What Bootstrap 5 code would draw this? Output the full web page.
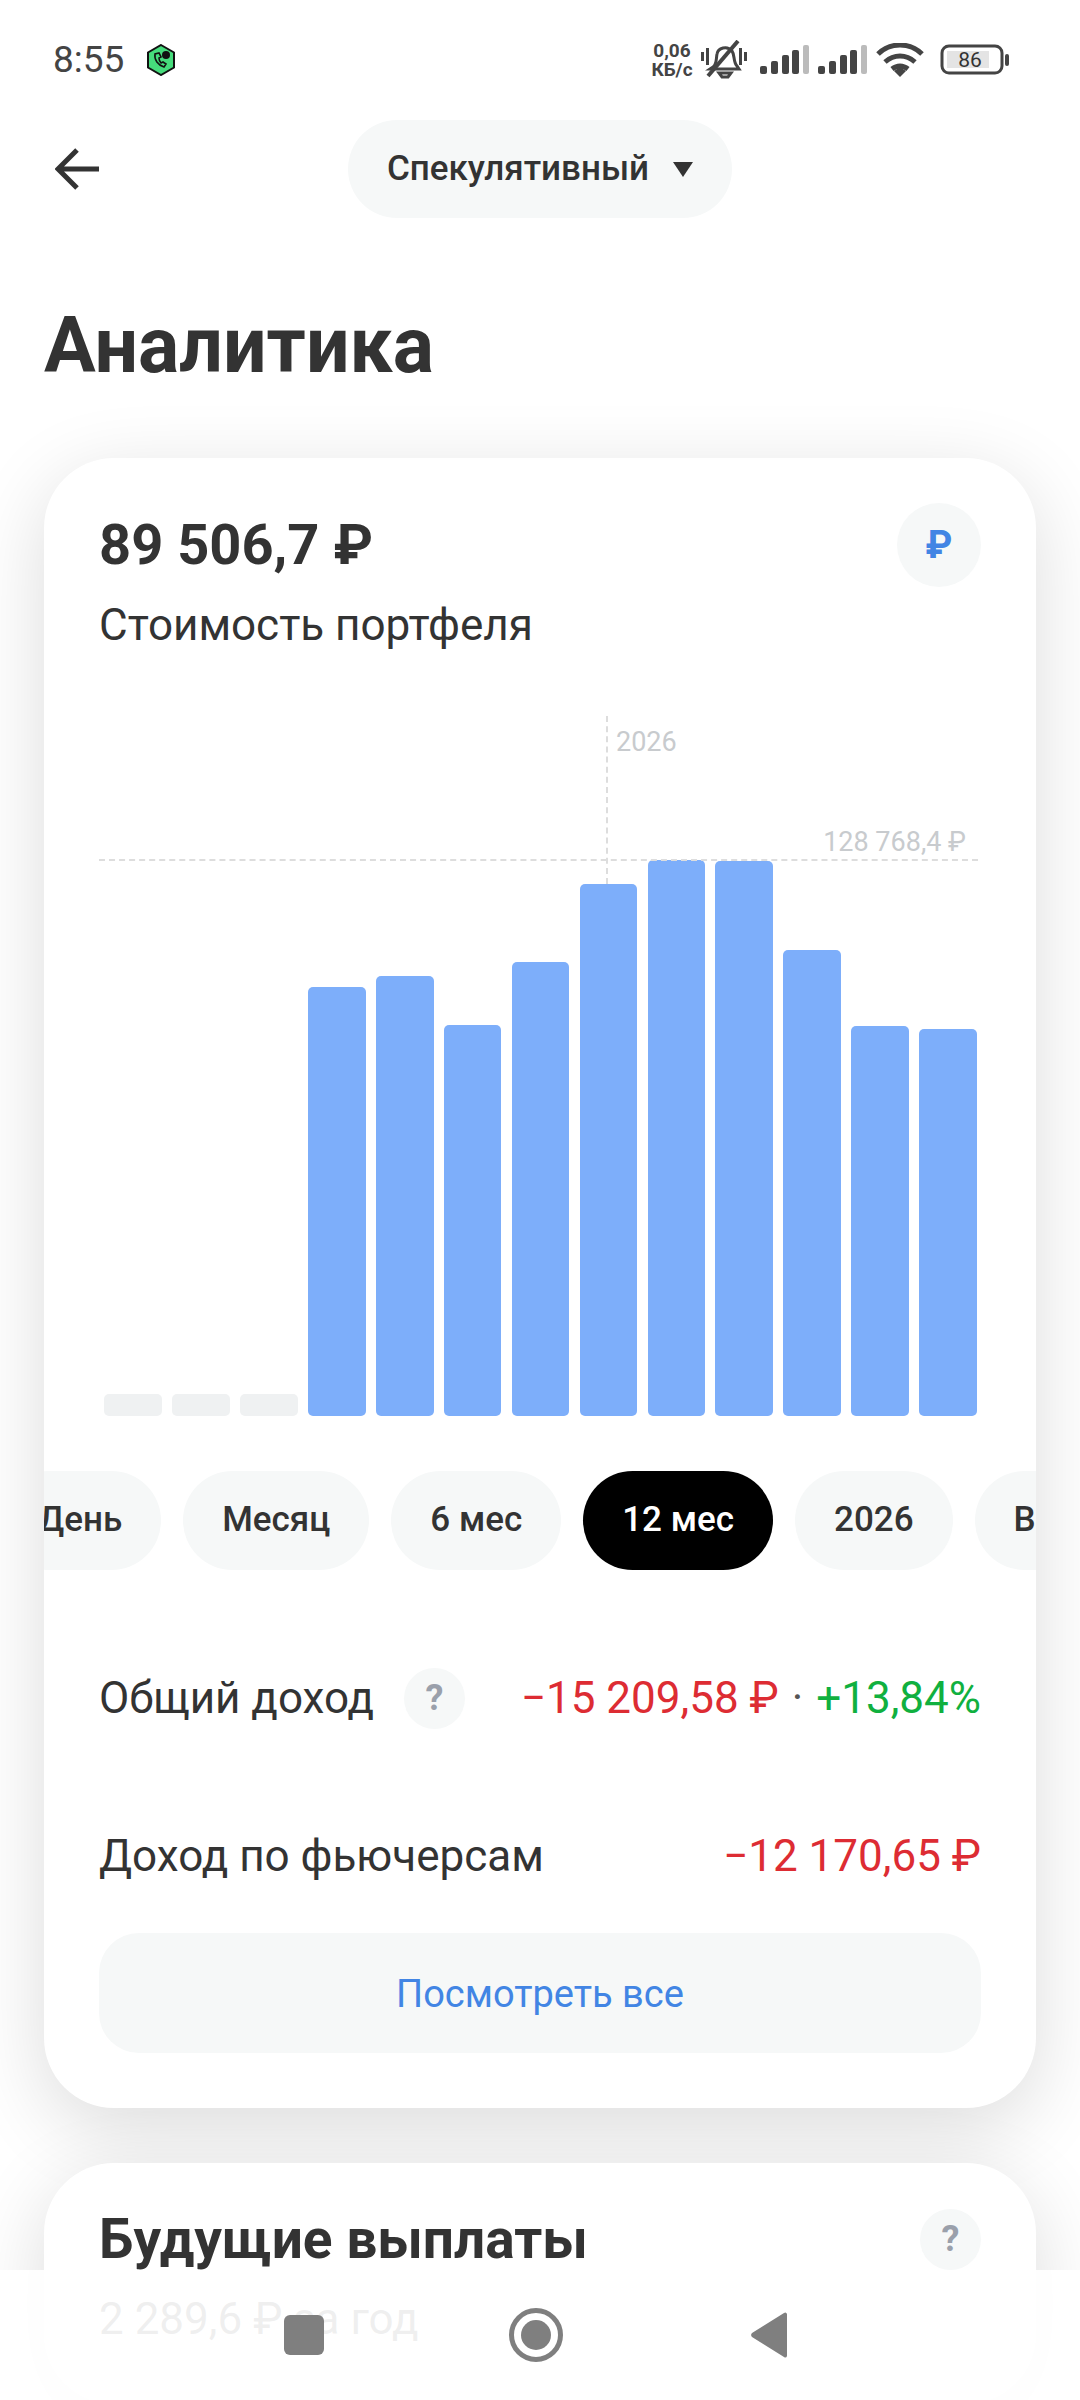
<!DOCTYPE html>
<html lang="ru">
<head>
  <meta charset="UTF-8" />
  <meta name="viewport" content="width=device-width, initial-scale=1.0" />
  <title>Аналитика</title>
  <link href="https://cdn.jsdelivr.net/npm/bootstrap@5.3.0/dist/css/bootstrap.min.css" rel="stylesheet">
  <style>
    body {
      width: 1080px;
      height: 2400px;
      overflow: hidden;
      position: relative;
      background: #fff;
      color: #333;
      font-family: Roboto, "Noto Sans", sans-serif;
    }
    .status-bar { height: 120px; padding: 0 70px 0 53px; }
    .status-time { font-size: 37px; color: #444; width: 93px; }
    .net-speed { width: 44px; font-size: 19px; line-height: 19px; font-weight: 700; color: #444; text-align: center; margin-right: 7px; }
    .bell-icon { margin-right: 13px; }
    .top-row { display: grid; grid-template-columns: 1fr auto 1fr; height: 98px; align-items: center; }
    .back-icon { margin-left: 55px; }
    .account-pill { height: 98px; width: 384px; border-radius: 49px; background: #f6f8f8; font-size: 35px; font-weight: 500; gap: 24px; }
    .page-title { font-size: 77px; line-height: 84px; font-weight: 700; margin: 86px 0 70px 44px; }
    .panel { margin: 0 44px; background: #fff; border-radius: 70px; box-shadow: 0 20px 80px rgba(0,0,0,.14); }
    .panel-main { padding: 45px 55px 55px 55px; height: 1650px; overflow: hidden; }
    .panel-next { margin-top: 55px; padding: 45px 55px 60px 55px; }
    .round-btn { width: 84px; height: 84px; border-radius: 50%; background: #f6f8f8; color: #4285e4; font-size: 38px; font-weight: 700; }
    .sum-value { font-size: 56px; line-height: 84px; font-weight: 700; }
    .sum-label { font-size: 44px; line-height: 50px; margin-top: 13px; }
    .chart-box { position: relative; height: 700px; margin-top: 66px; padding: 0 4px 0 5px; }
    .chart-bars { height: 100%; gap: 10.2px; }
    .chart-bar { flex: 1 1 0; background: #7daefa; border-radius: 5px; }
    .chart-bar-empty { background: #eff1f2; }
    .max-line { position: absolute; left: 0; right: 3px; top: 143px; border-top: 2px dashed #ddd; }
    .year-line { position: absolute; left: 507px; top: 0; height: 168px; border-left: 2px dashed #ddd; }
    .chart-note { position: absolute; font-size: 27px; line-height: 32px; color: #c8cbce; }
    .note-year { left: 517px; top: 10px; }
    .note-max { right: 15px; top: 110px; }
    .period-row { gap: 22px; margin: 55px -55px 0 -55px; overflow: hidden; }
    .period-pill { flex: none; height: 99px; padding: 0 39px; border-radius: 50px; background: #f6f8f8; font-size: 35px; font-weight: 500; }
    .period-first { margin-left: -45px; }
    .period-on { background: #000; color: #fff; }
    .info-row { height: 100px; font-size: 44px; }
    .info-row-one { margin-top: 78px; }
    .info-row-two { margin-top: 58px; }
    .help-btn { width: 61px; height: 61px; border-radius: 50%; background: #f6f8f8; color: #9aa0ab; font-size: 36px; font-weight: 700; }
    .help-gap { margin-left: 30px; }
    .val-red { color: #dd2c33; }
    .val-green { color: #10b03f; }
    .val-dot { margin: 0 13px; color: #555; }
    .see-all { height: 120px; margin-top: 27px; padding-top: 2px; border-radius: 40px; background: #f6f8f8; color: #4285e4; font-size: 38px; }
    .next-title { font-size: 55px; line-height: 62px; font-weight: 700; }
    .next-sub { font-size: 44px; line-height: 50px; margin-top: 24px; color: #333; }
    .nav-bar { position: absolute; left: 0; right: 0; top: 2270px; height: 130px; background: rgba(255,255,255,.92); }
  </style>
</head>
<body>
  <!-- Status bar -->
  <div class="status-bar d-flex align-items-center">
    <span class="status-time">8:55</span>
    <svg width="30" height="32" viewBox="0 0 30 32">
      <polygon points="15,1 28,8.5 28,23.5 15,31 2,23.5 2,8.5" fill="#46dc7c" stroke="#111" stroke-width="2"/>
      <path d="M9 10c-1 6 3 11 9 13l2-3-3-2-2 1c-1-1-2-3-2-5l2-1-2-4z" fill="none" stroke="#111" stroke-width="1.6"/>
      <circle cx="20" cy="11" r="4" fill="#111"/>
    </svg>
    <div class="ms-auto d-flex align-items-center">
      <div class="net-speed">0,06<br>КБ/с</div>
      <svg width="46" height="40" viewBox="0 0 46 40" class="bell-icon">
        <path d="M12 27c4-3 3-8 4-13 1-6 10-9 15-3 3 4 1 11 5 15l2 3H9z M18 33h12l-3 4h-6z" fill="none" stroke="#444" stroke-width="3"/>
        <path d="M7 36 37 1" stroke="#444" stroke-width="4"/>
        <path d="M1.5 12v9M6.5 8v17M39.5 8v17M44.5 12v9" stroke="#444" stroke-width="3"/>
      </svg>
      <svg width="50" height="30" viewBox="0 0 50 30" class="me-2">
        <rect x="0" y="21" width="7" height="8" rx="2" fill="#444"/><rect x="11" y="16" width="7" height="13" rx="2" fill="#444"/><rect x="22" y="10" width="7" height="19" rx="2" fill="#444"/><rect x="32" y="5" width="7" height="24" rx="2" fill="#444"/><rect x="43" y="0" width="6" height="29" rx="2" fill="#bbb"/>
      </svg>
      <svg width="50" height="30" viewBox="0 0 50 30" class="me-2">
        <rect x="0" y="21" width="7" height="8" rx="2" fill="#444"/><rect x="11" y="16" width="7" height="13" rx="2" fill="#444"/><rect x="22" y="10" width="7" height="19" rx="2" fill="#444"/><rect x="32" y="5" width="7" height="24" rx="2" fill="#444"/><rect x="43" y="0" width="6" height="29" rx="2" fill="#bbb"/>
      </svg>
      <svg width="48" height="34" viewBox="0 0 48 34" class="me-3">
        <path d="M2 11C14-1 34-1 46 11M9 19c9-8 21-8 30 0M16 26c5-4 11-4 16 0" fill="none" stroke="#444" stroke-width="5"/>
        <path d="M18 28l6-4 6 4-6 6z" fill="#444"/>
      </svg>
      <svg width="70" height="32" viewBox="0 0 70 32">
        <rect x="2" y="2" width="60" height="27" rx="7" fill="none" stroke="#444" stroke-width="3"/>
        <rect x="7" y="7" width="42" height="17" fill="#e4e4e4"/>
        <rect x="65" y="10" width="4" height="12" rx="2" fill="#444"/>
        <text x="30" y="23" text-anchor="middle" font-family="Roboto" font-size="21" fill="#333">86</text>
      </svg>
    </div>
  </div>

  <!-- Header -->
  <div class="top-row">
    <svg width="46" height="44" viewBox="0 0 46 44" class="back-icon">
      <path d="M44 22H4M22 3 3 22l19 19" fill="none" stroke="#333" stroke-width="5"/>
    </svg>
    <div class="account-pill d-flex align-items-center justify-content-center">
      <span>Спекулятивный</span>
      <svg width="20" height="16" viewBox="0 0 20 16"><path d="M0 1h20l-10 15z" fill="#333"/></svg>
    </div>
    <div></div>
  </div>

  <h1 class="page-title">Аналитика</h1>

  <!-- Main card -->
  <div class="panel panel-main">
    <div class="d-flex justify-content-between">
      <div class="sum-value">89 506,7 ₽</div>
      <div class="round-btn d-flex align-items-center justify-content-center">₽</div>
    </div>
    <div class="sum-label">Стоимость портфеля</div>

    <div class="chart-box">
      <div class="year-line"></div>
      <div class="max-line"></div>
      <span class="chart-note note-year">2026</span>
      <span class="chart-note note-max">128 768,4 ₽</span>
      <div class="chart-bars d-flex align-items-end">
        <div class="chart-bar chart-bar-empty" style="height:22px"></div>
        <div class="chart-bar chart-bar-empty" style="height:22px"></div>
        <div class="chart-bar chart-bar-empty" style="height:22px"></div>
        <div class="chart-bar" style="height:429px"></div>
        <div class="chart-bar" style="height:440px"></div>
        <div class="chart-bar" style="height:391px"></div>
        <div class="chart-bar" style="height:454px"></div>
        <div class="chart-bar" style="height:532px"></div>
        <div class="chart-bar" style="height:556px"></div>
        <div class="chart-bar" style="height:555px"></div>
        <div class="chart-bar" style="height:466px"></div>
        <div class="chart-bar" style="height:390px"></div>
        <div class="chart-bar" style="height:387px"></div>
      </div>
    </div>

    <div class="period-row d-flex">
      <div class="period-pill period-first d-flex align-items-center">День</div>
      <div class="period-pill d-flex align-items-center">Месяц</div>
      <div class="period-pill d-flex align-items-center">6 мес</div>
      <div class="period-pill period-on d-flex align-items-center">12 мес</div>
      <div class="period-pill d-flex align-items-center">2026</div>
      <div class="period-pill d-flex align-items-center">Всё время</div>
    </div>

    <div class="info-row info-row-one d-flex align-items-center">
      <span>Общий доход</span>
      <span class="help-btn help-gap d-flex align-items-center justify-content-center">?</span>
      <span class="ms-auto"><span class="val-red">−15 209,58 ₽</span><span class="val-dot">·</span><span class="val-green">+13,84%</span></span>
    </div>
    <div class="info-row info-row-two d-flex align-items-center justify-content-between">
      <span>Доход по фьючерсам</span>
      <span class="val-red">−12 170,65 ₽</span>
    </div>
    <div class="see-all d-flex align-items-center justify-content-center">Посмотреть все</div>
  </div>

  <!-- Second card, cut by the nav bar -->
  <div class="panel panel-next">
    <div class="d-flex justify-content-between align-items-center">
      <div class="next-title">Будущие выплаты</div>
      <span class="help-btn d-flex align-items-center justify-content-center">?</span>
    </div>
    <div class="next-sub">2 289,6 ₽ за год</div>
  </div>

  <!-- Android nav bar -->
  <div class="nav-bar d-flex align-items-center">
    <svg width="1080" height="130" viewBox="0 0 1080 130">
      <rect x="284" y="45" width="40" height="40" rx="6" fill="#7f7f7f"/>
      <circle cx="536" cy="65" r="24.5" fill="none" stroke="#7f7f7f" stroke-width="5"/>
      <circle cx="536" cy="65" r="15" fill="#7f7f7f"/>
      <path d="M787 44v42a2 2 0 0 1-3 1L752 67a3 3 0 0 1 0-4l32-20a2 2 0 0 1 3 1z" fill="#7f7f7f"/>
    </svg>
  </div>

  <script src="https://cdn.jsdelivr.net/npm/bootstrap@5.3.0/dist/js/bootstrap.bundle.min.js"></script>
</body>
</html>
